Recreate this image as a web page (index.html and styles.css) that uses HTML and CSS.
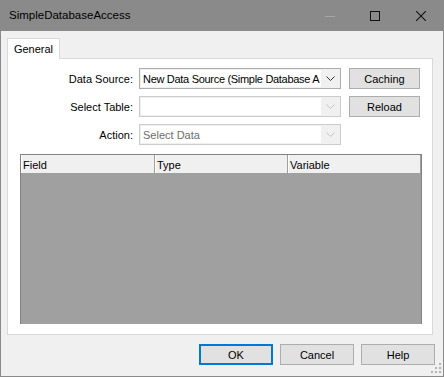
FILE: index.html
```html
<!DOCTYPE html>
<html>
<head>
<meta charset="utf-8">
<title>SimpleDatabaseAccess</title>
<link rel="stylesheet" href="styles.css">
</head>
<body>
<div class="window">
  <div class="titlebar">
    <div class="title">SimpleDatabaseAccess</div>
    <div class="caption-btns">
      <div class="cbtn min"><svg width="10" height="10" viewBox="0 0 10 10"><line x1="0" y1="5.5" x2="10" y2="5.5" stroke="#a6a6a6" stroke-width="1"/></svg></div>
      <div class="cbtn max"><svg width="10" height="10" viewBox="0 0 10 10"><rect x="0.5" y="0.5" width="9" height="9" fill="none" stroke="#111" stroke-width="1"/></svg></div>
      <div class="cbtn close"><svg width="10" height="10" viewBox="0 0 10 10"><path d="M0 0 L10 10 M10 0 L0 10" stroke="#111" stroke-width="1.1"/></svg></div>
    </div>
  </div>
  <div class="client">
    <div class="tabs"><div class="tab">General</div></div>
    <div class="panel">
      <div class="form">
        <div class="label">Data Source:</div>
        <div class="combo">
          <div class="ctext wide">New Data Source (Simple Database A</div>
          <div class="carrow"><svg width="9" height="5" viewBox="0 0 9 5"><polyline points="0.5,0.5 4.5,4.5 8.5,0.5" fill="none" stroke="#333" stroke-width="1"/></svg></div>
        </div>
        <div class="btn">Caching</div>

        <div class="label">Select Table:</div>
        <div class="combo disabled">
          <div class="ctext"></div>
          <div class="carrow"><svg width="9" height="5" viewBox="0 0 9 5"><polyline points="0.5,0.5 4.5,4.5 8.5,0.5" fill="none" stroke="#c4c4c4" stroke-width="1"/></svg></div>
        </div>
        <div class="btn">Reload</div>

        <div class="label">Action:</div>
        <div class="combo disabled">
          <div class="ctext gray">Select Data</div>
          <div class="carrow"><svg width="9" height="5" viewBox="0 0 9 5"><polyline points="0.5,0.5 4.5,4.5 8.5,0.5" fill="none" stroke="#c4c4c4" stroke-width="1"/></svg></div>
        </div>
        <div></div>
      </div>
      <div class="listview">
        <div class="lvheader">
          <div class="hcell c1">Field</div>
          <div class="hcell c2">Type</div>
          <div class="hcell c3">Variable</div>
        </div>
        <div class="lvbody"></div>
      </div>
    </div>
    <div class="footer">
      <div class="btn fbtn default">OK</div>
      <div class="btn fbtn">Cancel</div>
      <div class="btn fbtn">Help</div>
    </div>
  </div>
  <div class="grip">
    <svg width="11" height="11" viewBox="0 0 11 11" fill="#b4b4b4">
      <rect x="8" y="0" width="2" height="2"/>
      <rect x="4" y="4" width="2" height="2"/><rect x="8" y="4" width="2" height="2"/>
      <rect x="0" y="8" width="2" height="2"/><rect x="4" y="8" width="2" height="2"/><rect x="8" y="8" width="2" height="2"/>
    </svg>
  </div>
</div>
</body>
</html>
```
FILE: styles.css
```css
* { box-sizing: border-box; }
html, body { margin: 0; padding: 0; background: #fff; }
body {
  font-family: "Liberation Sans", Arial, sans-serif;
  font-size: 11px;
  color: #000;
}
.window {
  position: relative;
  width: 444px;
  height: 377px;
  background: #8a8a8a;
  padding: 0 1px 1px 1px;
  display: flex;
  flex-direction: column;
}
.titlebar {
  height: 31px;
  flex: none;
  display: flex;
  align-items: center;
  background: #8a8a8a;
}
.title {
  flex: 1;
  padding-left: 8px;
  font-size: 11.5px;
  color: #000;
  padding-bottom: 1px;
}
.caption-btns { display: flex; height: 31px; }
.cbtn {
  width: 46px;
  height: 31px;
  display: flex;
  align-items: center;
  justify-content: center;
}
.cbtn svg { display: block; }
.cbtn.min { padding-left: 1px; }
.cbtn.close { width: 45px; padding-left: 1px; }
.client {
  flex: 1;
  background: #f0f0f0;
  padding: 7px 10px 0 6px;
  display: flex;
  flex-direction: column;
}
.tabs { display: flex; height: 20px; flex: none; }
.tab {
  width: 53px;
  height: 21px;
  background: #fff;
  border: 1px solid #d9d9d9;
  border-bottom: none;
  position: relative;
  z-index: 1;
  display: flex;
  align-items: center;
  justify-content: center;
  padding-bottom: 1px;
}
.panel {
  height: 277px;
  flex: none;
  background: #fff;
  border: 1px solid #d9d9d9;
  padding: 9px 10px 10px 0;
  display: flex;
  flex-direction: column;
}
.form {
  display: grid;
  grid-template-columns: 125px 202px 73px;
  grid-auto-rows: 21px;
  column-gap: 6px;
  row-gap: 7px;
}
.form .btn { margin-left: 2px; }
.label {
  text-align: right;
  display: flex;
  align-items: center;
  justify-content: flex-end;
}
.combo {
  border: 1px solid #adadad;
  background: #f0f0f0;
  padding: 1px;
  display: flex;
  min-width: 0;
}
.combo.disabled { border-color: #cccccc; }
.ctext {
  flex: 1;
  min-width: 0;
  background: #fff;
  overflow: hidden;
  white-space: nowrap;
  padding-left: 2px;
  display: flex;
  align-items: center;
}
.ctext.wide { letter-spacing: -0.3px; }
.ctext.gray { color: #6d6d6d; }
.carrow {
  width: 18px;
  flex: none;
  display: flex;
  align-items: center;
  justify-content: center;
}
.carrow svg { display: block; }
.btn {
  background: #e1e1e1;
  border: 1px solid #adadad;
  display: flex;
  align-items: center;
  justify-content: center;
}
.listview {
  margin: 9px 0 0 12px;
  height: 170px;
  border: 1px solid #828282;
  border-bottom: none;
  display: flex;
  flex-direction: column;
}
.lvheader {
  height: 18px;
  flex: none;
  display: flex;
  background: #f0f0f0;
}
.hcell {
  border-left: 1px solid #fff;
  border-right: 1px solid #a0a0a0;
  padding: 2px 0 0 1px;
  display: flex;
  align-items: center;
}
.hcell.c1 { width: 134px; }
.hcell.c2 { width: 133px; }
.hcell.c3 { width: 133px; }
.lvbody { flex: 1; background: #a0a0a0; }
.footer {
  margin-top: 9px;
  margin-right: -2px;
  display: flex;
  justify-content: flex-end;
  gap: 7px;
}
.fbtn { width: 74px; height: 21px; }
.fbtn.default { border: 2px solid #0078d7; }
.grip {
  position: absolute;
  right: 2px;
  bottom: 3px;
  width: 11px;
  height: 11px;
}
.grip svg { display: block; }
```
